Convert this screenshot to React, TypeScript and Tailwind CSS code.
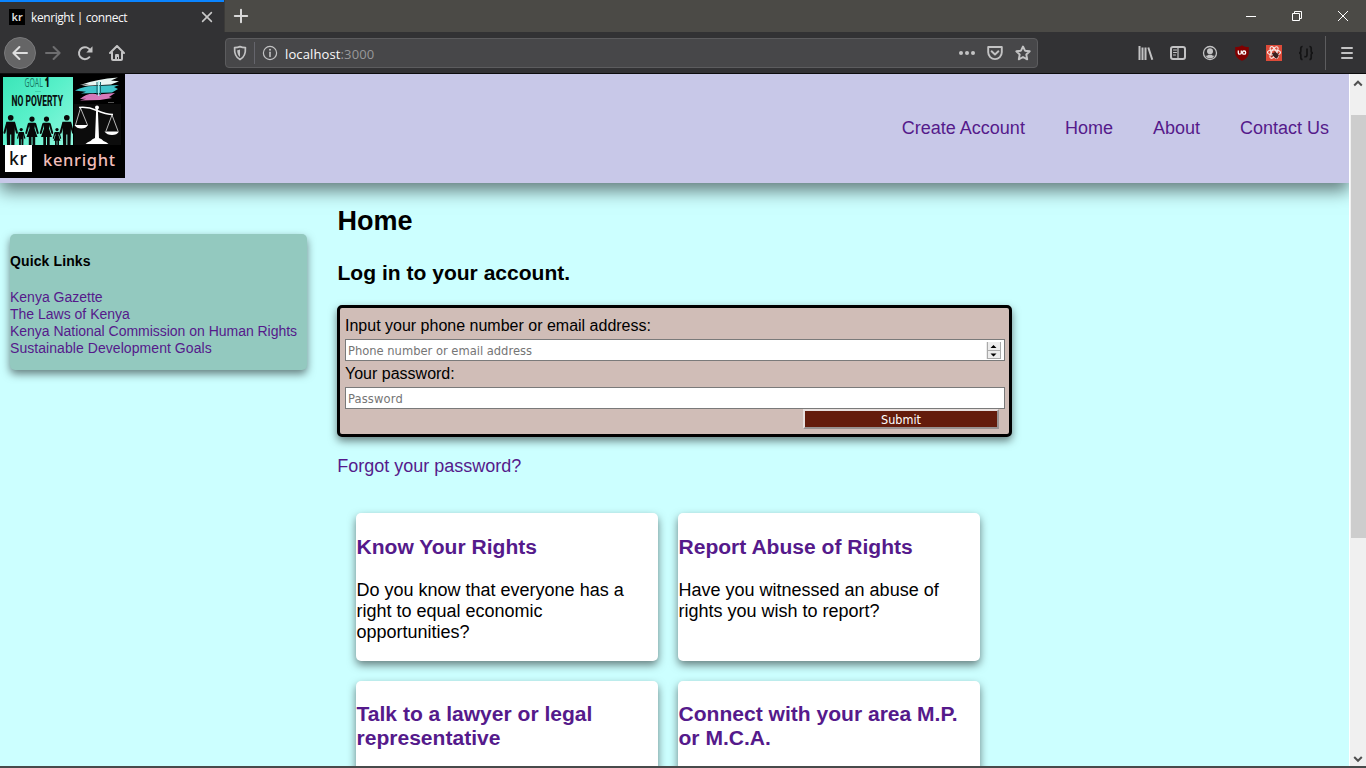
import React from 'react';

const stroke = { fill: 'none', stroke: 'currentColor', strokeWidth: 2, strokeLinecap: 'round', strokeLinejoin: 'round' } as const;

function Icon({ children }: { children: React.ReactNode }) {
  return (
    <svg width="16" height="16" viewBox="0 0 16 16" className="shrink-0">
      {children}
    </svg>
  );
}

function Slot({ children, className = '' }: { children: React.ReactNode; className?: string }) {
  return <div className={`flex h-8 w-8 shrink-0 items-center justify-center ${className}`}>{children}</div>;
}

function TitleBar() {
  return (
    <div className="flex h-8 bg-[#4b4a46] text-[#f9f9fa]">
      <div className="flex h-8 w-56 items-center border-t-2 border-[#0a84ff] bg-[#323234] pl-[9px]">
        <svg width="16" height="16" viewBox="0 0 16 16">
          <rect width="16" height="16" fill="#000" />
          <text x="2.500" y="12" fontSize="11" fontWeight="600" fontFamily="Noto Sans, sans-serif" fill="#ddd">kr</text>
        </svg>
        <span className="ml-1.5 w-[170px] pt-0.5 font-['Open_Sans',sans-serif] text-xs tracking-[-0.42px]">kenright | connect</span>
        <svg width="12" height="12" viewBox="0 0 12 12" className="text-[#c8c8c8]">
          <path d="M1.600 1.600l8.800 8.800M10.400 1.600l-8.800 8.800" {...stroke} strokeWidth="1.600" />
        </svg>
      </div>
      <div className="flex w-[33px] items-center justify-center border-l border-[#3c3b39] text-[#d8d8d8]">
        <Icon><path d="M8 1.800v12.400M1.800 8h12.400" {...stroke} /></Icon>
      </div>
      <div className="ml-auto flex items-center">
        <div className="flex w-[46px] justify-center"><svg width="10" height="10"><path d="M0 5.500h10" stroke="#fff" /></svg></div>
        <div className="flex w-[46px] justify-center">
          <svg width="10" height="10" fill="none" stroke="#fff"><path d="M.5 2.500h7v7h-7zM2.500 2.500v-2h7v7h-2" /></svg>
        </div>
        <div className="flex w-[46px] justify-center"><svg width="10" height="10"><path d="M0 0l10 10M10 0L0 10" stroke="#fff" /></svg></div>
      </div>
    </div>
  );
}

function ToolBar() {
  return (
    <div className="flex h-[42px] items-center border-b border-[#0c0c0d] bg-[#323234] pl-1 text-[#c3c3c4]">
      <Slot className="rounded-full border border-[#79797b] bg-[#656566] text-[#dededf]">
        <Icon><path d="M15 8H1.800M7.400 2L1.400 8l6 6" {...stroke} /></Icon>
      </Slot>
      <Slot className="ml-px text-[#6e6e70]">
        <Icon><path d="M1 8h13.200M8.600 2l6 6-6 6" {...stroke} /></Icon>
      </Slot>
      <Slot>
        <Icon>
          <path d="M12.400 12.200A6 6 0 1 1 13.400 5.600" {...stroke} />
          <path d="M15.500 1.200v6.200H9.300z" fill="currentColor" />
        </Icon>
      </Slot>
      <Slot>
        <Icon>
          <path d="M1 8l7-7 7 7M3 7.500V14a1 1 0 0 0 1 1h8a1 1 0 0 0 1-1V7.500" {...stroke} />
          <path d="M6 15v-4.600q0-1.400 1-1.400h2q1 0 1 1.400V15H9v-3H8v3z" fill="currentColor" />
        </Icon>
      </Slot>
      <div className="ml-[92px] flex h-[30px] w-[813px] items-center rounded-sm border border-[#5c5c5e] bg-[#474749] pl-1.5">
        <Icon>
          <path d="M8 1.600c1.800.8 3.600 1 5.400 1 .3 5.500-.7 9.600-5.400 12-4.700-2.400-5.700-6.500-5.400-12 1.800 0 3.600-.2 5.400-1z" {...stroke} strokeWidth="1.700" />
          <path d="M8 4.500v7.500C5.900 10.300 5.200 8 5.200 5.200Q6.900 5 8 4.500z" fill="currentColor" />
        </Icon>
        <div className="ml-[6px] mr-[7px] h-[22px] w-px bg-[#65656c]" />
        <Icon>
          <circle cx="8" cy="8" r="6.600" {...stroke} strokeWidth="1.200" />
          <circle cx="8" cy="4.800" r="1" fill="currentColor" />
          <path d="M8 7.300v4.200" {...stroke} strokeWidth="1.600" />
        </Icon>
        <span className="ml-[7px] pt-0.5 font-['Open_Sans',sans-serif] text-[13px] leading-[18px] tracking-[0.12px] text-[#f9f9fa]">
          localhost<span className="text-[#98989a]">:3000</span>
        </span>
        <div className="ml-auto mr-1.5 flex gap-3">
          <Icon><g fill="currentColor"><circle cx="2" cy="8" r="2" /><circle cx="8" cy="8" r="2" /><circle cx="14" cy="8" r="2" /></g></Icon>
          <Icon><path d="M1.200 2h13.600v5.300a6.800 6.800 0 0 1-13.600 0zM4.600 6.300L8 9.500l3.400-3.200" {...stroke} strokeWidth="1.900" /></Icon>
          <Icon><path d="M8 1.500l2 4.200 4.700.6-3.400 3.200.9 4.800L8 12l-4.200 2.300.9-4.800-3.400-3.200L6 5.700z" {...stroke} strokeWidth="1.900" /></Icon>
        </div>
      </div>
      <div className="ml-auto flex items-center">
        <Slot><Icon><path d="M1.500 1v14M4.500 2.500V15M7.500 2.500V15M10.300 2.500l4 12.300" {...stroke} strokeLinecap="butt" /></Icon></Slot>
        <Slot>
          <Icon>
            <rect x="1" y="2" width="14" height="12" rx="2" {...stroke} />
            <path d="M8 2v12" {...stroke} strokeWidth="1.200" />
            <path d="M3.500 5h3M3.500 7.500h3M3.500 10h2" {...stroke} strokeWidth="1" />
          </Icon>
        </Slot>
        <Slot>
          <Icon>
            <circle cx="8" cy="8" r="6.500" {...stroke} strokeWidth="1.300" />
            <circle cx="8" cy="6.300" r="3" fill="currentColor" />
            <path d="M3.300 10.500q2 .8 3-.7h3.400q1 1.500 3 .7Q11.200 13.300 8 13.300t-4.700-2.800z" fill="currentColor" />
          </Icon>
        </Slot>
        <Slot>
          <Icon>
            <path d="M8 .2c2 1.500 4.300 1.800 6.800 1.800v5.500c0 4.300-3 6.600-6.800 8.300-3.800-1.700-6.800-4-6.800-8.300V2C3.700 2 6 1.700 8 .2z" fill="#800000" />
            <path d="M4.300 5.500v2.400q0 1.300 1.500 1.300t1.500-1.300V5.500" fill="none" stroke="#fff" strokeWidth="1.300" />
            <rect x="8.600" y="6" width="3" height="3.200" rx="1.200" fill="none" stroke="#fff" strokeWidth="1.300" />
          </Icon>
        </Slot>
        <Slot>
          <Icon>
            <rect width="16" height="16" fill="#dd4b39" />
            <g fill="none" stroke="#f7e9e7" strokeWidth="1.100">
              <ellipse cx="8" cy="7.500" rx="6.500" ry="2.500" />
              <ellipse cx="8" cy="7.500" rx="6.500" ry="2.500" transform="rotate(60 8 7.500)" />
              <ellipse cx="8" cy="7.500" rx="6.500" ry="2.500" transform="rotate(120 8 7.500)" />
            </g>
            <ellipse cx="9.500" cy="10.200" rx="2.200" ry="3.200" transform="rotate(-38 9.500 10.200)" fill="#3a2020" />
            <path d="M6 8l4.500 5.500M8.500 6.500l4.500 4M5.500 11.500l3-2M12.500 8l-2 2.500" stroke="#3a2020" strokeWidth=".9" />
          </Icon>
        </Slot>
        <Slot>
          <Icon>
            <path d="M4.600 1.500Q2.800 1.500 2.800 3.500v2.500q0 2-1.800 2 1.800 0 1.800 2v2.500q0 2 1.800 2M11.400 1.500q1.800 0 1.800 2v2.500q0 2 1.800 2-1.800 0-1.800 2v2.500q0 2-1.800 2M9 3.500v6.500q0 2.200-2.700 1.600" fill="none" stroke="#141415" strokeWidth="1.700" />
          </Icon>
        </Slot>
        <div className="ml-[3px] h-[34px] w-px bg-[#5d5d5f]" />
        <div className="ml-[5px] mr-[3px] flex h-8 w-8 items-center justify-center"><Icon><path d="M3 3h10M3 8h10M3 13h10" {...stroke} /></Icon></div>
      </div>
    </div>
  );
}

function Person({ x, y, s, skirt = false }: { x: number; y: number; s: number; skirt?: boolean }) {
  return (
    <g transform={`translate(${x} ${y}) scale(${s})`} fill="#080808" stroke="#080808">
      <circle cx="0" cy="2.600" r="2.600" stroke="none" />
      <path d="M-3.300 7.500l-2.500 9M3.300 7.500l2.500 9" strokeWidth="1.900" strokeLinecap="round" />
      {skirt ? (
        <path d="M-3.300 6.300h6.600l-.8 5.700 3 8.500H3.200V29H.5v-8.500H-.5V29H-3.200v-8.500h-2.300l3-8.500z" stroke="none" />
      ) : (
        <path d="M-4 6.300h8l-.6 22.700H.5V18H-.5v11h-2.900z" stroke="none" />
      )}
    </g>
  );
}

function Logo() {
  return (
    <svg width="125" height="104" viewBox="0 0 125 104" className="block">
      <defs>
        <clipPath id="poster"><rect x="3" y="3" width="70" height="68" /></clipPath>
        <linearGradient id="mint" x1="0" y1="0" x2="1" y2="1">
          <stop offset="0" stopColor="#3be5b8" />
          <stop offset="0.450" stopColor="#58f0c9" />
          <stop offset="1" stopColor="#8ff7de" />
        </linearGradient>
      </defs>
      <rect width="125" height="104" fill="#000" />
      <rect x="3" y="3" width="70" height="68" fill="url(#mint)" />
      <g clipPath="url(#poster)">
        <text transform="translate(24.500 13) scale(0.510 1)" fontFamily="Open Sans, sans-serif" fontSize="13.500" fill="#187863">GOAL</text>
        <text transform="translate(44.700 13) scale(0.600 1)" fontFamily="Open Sans, sans-serif" fontSize="13.500" fontWeight="800" fill="#06130f">1</text>
        <path d="M35 17.500h6" stroke="#36b89b" strokeWidth=".6" />
        <text x="11.500" y="31.500" fontFamily="Roboto, sans-serif" fontSize="14" fontWeight="800" fill="#081311" textLength="51.500" lengthAdjust="spacingAndGlyphs">NO POVERTY</text>
        <Person x={10.700} y={41} s={1.080} />
        <Person x={21.200} y={54} s={0.620} />
        <Person x={32} y={42.500} s={1} skirt />
        <Person x={46.500} y={42.500} s={1} skirt />
        <Person x={57} y={54} s={0.620} skirt />
        <Person x={66.800} y={41} s={1.080} />
      </g>
      <rect x="74" y="30" width="47" height="41" fill="#0c0c0c" />
      <g>
        <path d="M80 11Q96 5 118 3.500l-7 3 8 .8-8 3.200-29 1.500 7-2z" fill="#e9f5f3" />
        <path d="M75 16.500q10-5 19-4.500l25-1-5 2 4 2-6 3.500-31 1 5-1.700-7-.8z" fill="#40c5cb" />
        <path d="M80 25q8-7 18-4.500l17-1.500-6 4 3 1-12 2-20 .5 6-1.800z" fill="#d579ba" />
        <path d="M97 8v13M100.500 8v13" stroke="#17646b" strokeWidth="1" />
        <path d="M98.700 7v15" stroke="#aef2f3" strokeWidth="1.200" />
        <path d="M108 28.500h6" stroke="#777" strokeWidth=".7" />
      </g>
      <g fill="none" stroke="#fff">
        <circle cx="97" cy="33.500" r="2" fill="#fff" stroke="none" />
        <path d="M79 33.500q9-1 18 3t16 4" strokeWidth="1.500" />
        <path d="M96.200 34h1.600l1.200 30q3 1 4.500 3 3 .8 5 3H85.500q2-2.200 5-3 1.500-2 4.500-3z" fill="#fff" stroke="none" />
        <path d="M80.500 34l-5 17M80.500 34l7 17M112 41l-6 16M112 41l6 16" strokeWidth=".7" />
        <path d="M74.500 51h13.500q-2 3.600-6.700 3.600T74.500 51zM104.500 57.500h14.500q-2 3.600-7 3.600t-7.500-3.600z" fill="#fff" stroke="none" />
      </g>
      <rect x="5" y="71" width="27" height="27" fill="#fff" />
      <text x="9" y="91" fontFamily="Noto Sans, sans-serif" fontSize="17.500" fontWeight="500" fill="#111" textLength="18">kr</text>
      <text x="43" y="92" fontFamily="Noto Sans, sans-serif" fontSize="16.500" fontWeight="500" fill="#f2bdba" textLength="72">kenright</text>
    </svg>
  );
}

const cards = [
  { title: 'Know Your Rights', body: 'Do you know that everyone has a right to equal economic opportunities?' },
  { title: 'Report Abuse of Rights', body: 'Have you witnessed an abuse of rights you wish to report?' },
  { title: 'Talk to a lawyer or legal representative', body: '' },
  { title: 'Connect with your area M.P. or M.C.A.', body: '' },
];

function LoginForm() {
  return (
    <form className="mt-5 h-[132px] w-[675px] rounded-[5px] border-[3px] border-black bg-[#d0bdb7] pl-[5px] pt-1 text-base shadow-[0_4px_8px_rgba(0,0,0,0.5)]">
      <label className="block h-[27px] leading-[27px]">Input your phone number or email address:</label>
      <div className="flex h-[22px] w-[660px] items-center border border-[#7a7a7a] bg-white pr-[3px]">
        <input
          className="min-w-0 flex-1 bg-transparent px-[2px] pt-0.5 font-['DejaVu_Sans_Condensed','DejaVu_Sans',sans-serif] text-[12.8px] leading-[18px] placeholder:text-[#757575] placeholder:opacity-100"
          placeholder="Phone number or email address"
        />
        <svg width="15" height="17" viewBox="0 0 15 17">
          <rect width="15" height="17" fill="#ececec" />
          <path d="M1.500 0v16M14.500 0v16M1 8.500h13M1 16.500h14" stroke="#aaa" />
          <path d="M4.500 6h6L7.500 3zM4.500 11.500h6l-3 3z" fill="#000" />
        </svg>
      </div>
      <label className="block h-[26px] leading-[26px]">Your password:</label>
      <input
        className="block h-[22px] w-[660px] border border-[#7a7a7a] bg-white px-[2px] pt-px font-['DejaVu_Sans_Condensed','DejaVu_Sans',sans-serif] text-[12.8px] leading-[19px] tracking-[0.15px] placeholder:text-[#757575] placeholder:opacity-100"
        type="password"
        placeholder="Password"
      />
      <button
        type="button"
        className="ml-[458px] block h-5 w-[196px] border-2 border-b-[#999291] border-l-[#e8e0de] border-r-[#999291] border-t-[#e8e0de] bg-[#641c0c] pt-px text-center font-['DejaVu_Sans_Condensed','DejaVu_Sans',sans-serif] text-[12.5px] leading-[15px] text-white"
      >
        Submit
      </button>
    </form>
  );
}

export default function App() {
  return (
    <div className="flex h-screen w-full flex-col overflow-hidden bg-[#ccffff] font-['Liberation_Sans',Arial,sans-serif] text-lg text-black">
      <TitleBar />
      <ToolBar />
      <div className="flex min-h-0 flex-1">
        <div className="flex min-w-0 flex-1 flex-col overflow-hidden">
          <header className="flex h-[109px] shrink-0 justify-between bg-[#c8c8e8] shadow-[0_8px_16px_rgba(0,0,0,0.5)]">
            <Logo />
            <nav className="flex h-[108px] items-center gap-10 pr-5 text-[#551a8b]">
              <a>Create Account</a>
              <a>Home</a>
              <a>About</a>
              <a>Contact Us</a>
            </nav>
          </header>
          <div className="flex min-h-0 flex-1">
            <aside className="ml-[10px] mt-[51px] h-[136px] w-[297px] shrink-0 rounded-[5px] bg-[#93c9bf] pt-[19px] text-[14px] leading-[17px] shadow-[0_4px_8px_rgba(0,0,0,0.5)]">
              <h4 className="mb-[19px] font-bold tracking-[0.120px]">Quick Links</h4>
              <ul className="text-[#551a8b]">
                <li>Kenya Gazette</li>
                <li>The Laws of Kenya</li>
                <li className="tracking-[-0.020px]">Kenya National Commission on Human Rights</li>
                <li className="tracking-[0.060px]">Sustainable Development Goals</li>
              </ul>
            </aside>
            <main className="ml-[30px] w-[675px] shrink-0 pt-[22px]">
              <h2 className="pl-[0.500px] text-[27px] font-bold leading-8">Home</h2>
              <h3 className="mt-6 pl-[0.500px] text-[21.060px] font-bold leading-6">Log in to your account.</h3>
              <LoginForm />
              <a className="mt-[19px] block pl-[0.300px] leading-[21px] text-[#551a8b]">Forgot your password?</a>
              <div className="ml-[19px] mt-9 grid auto-rows-[148px] grid-cols-[302px_302px] gap-5">
                {cards.map((c) => (
                  <article
                    key={c.title}
                    className={`rounded-[5px] bg-white pl-[0.500px] shadow-[0_4px_8px_rgba(0,0,0,0.5)] ${c.body ? 'pt-[22px]' : 'pt-[21px]'}`}
                  >
                    <h3 className="text-[21.060px] font-bold leading-6 text-[#551a8b]">{c.title}</h3>
                    {c.body && <p className="mt-[21px] leading-[21px]">{c.body}</p>}
                  </article>
                ))}
              </div>
            </main>
          </div>
        </div>
        <div className="flex w-[17px] flex-col items-center border-l border-white bg-[#f0f0f0]">
          <svg width="16" height="41" viewBox="0 0 16 41"><path d="M4.200 11.500L8 7.700l3.800 3.800" fill="none" stroke="#505050" strokeWidth="2" /></svg>
          <div className="h-[423px] w-[15px] bg-[#cdcdcd]" />
          <svg width="16" height="16" viewBox="0 0 16 16" className="mt-auto"><path d="M4.200 7L8 10.800 11.800 7" fill="none" stroke="#505050" strokeWidth="2" /></svg>
        </div>
      </div>
      <div className="h-0.5 shrink-0 bg-[#484b4b]" />
    </div>
  );
}
